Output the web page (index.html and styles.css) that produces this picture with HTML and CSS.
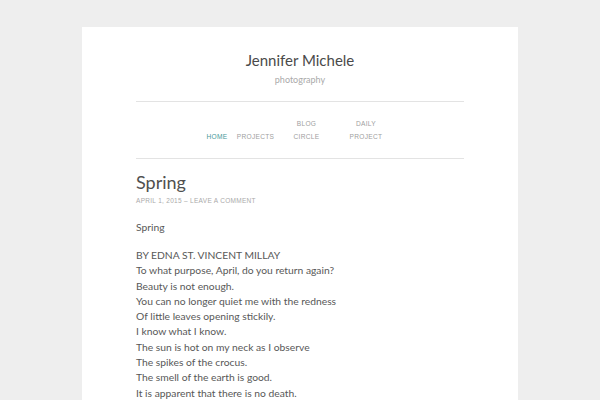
FILE: index.html
```html
<!DOCTYPE html>
<html>
<head>
<meta charset="utf-8">
<link rel="stylesheet" href="styles.css">
</head>
<body>
<div class="page">
  <header class="site-header">
    <h1 class="site-title">Jennifer Michele</h1>
    <p class="site-desc">photography</p>
  </header>
  <nav class="main-nav">
    <ul>
      <li class="c-home"><a class="current">Home</a></li>
      <li class="c-projects"><a>Projects</a></li>
      <li class="c-blog"><a class="wrap">Blog Circle</a></li>
      <li class="c-daily"><a class="wrap">Daily Project</a></li>
    </ul>
  </nav>
  <article class="post">
    <h2 class="post-title">Spring</h2>
    <div class="post-meta">April 1, 2015 – Leave a comment</div>
    <div class="post-body">
      <p>Spring</p>
      <p>BY EDNA ST. VINCENT MILLAY<br>
      To what purpose, April, do you return again?<br>
      Beauty is not enough.<br>
      You can no longer quiet me with the redness<br>
      Of little leaves opening stickily.<br>
      I know what I know.<br>
      The sun is hot on my neck as I observe<br>
      The spikes of the crocus.<br>
      The smell of the earth is good.<br>
      It is apparent that there is no death.</p>
    </div>
  </article>
</div>
</body>
</html>
```
FILE: styles.css
```css
html, body {
  margin: 0;
  padding: 0;
  background: #eeeeee;
  height: 100%;
  overflow: hidden;
}
body {
  padding-top: 27px;
  font-family: Lato, "Liberation Sans", sans-serif;
  color: #555;
}
.page {
  width: 328px;
  margin: 0 auto;
  background: #fff;
  padding: 0 54px;
  min-height: 500px;
}
.site-header {
  text-align: center;
  padding: 23px 0 15px;
  border-bottom: 1px solid #e3e3e3;
}
.site-title {
  margin: 0;
  font-size: 15px;
  line-height: 20px;
  font-weight: 400;
  color: #4a4a4a;
}
.site-desc {
  margin: 4px 0 0;
  font-size: 9px;
  line-height: 12px;
  color: #aaa;
}
.main-nav {
  padding: 15px 0 15px;
  border-bottom: 1px solid #e3e3e3;
}
.main-nav ul {
  list-style: none;
  margin: 0;
  padding: 0;
  display: flex;
  justify-content: center;
  align-items: flex-end;
}
.main-nav li {
  text-align: center;
  font-family: "Liberation Sans", Arial, sans-serif;
  font-size: 6.6px;
  line-height: 13px;
  letter-spacing: 0.3px;
  text-transform: uppercase;
  color: #a0a0a0;
}
.main-nav a {
  display: block;
  margin: 0 auto;
}
.main-nav a.wrap {
  max-width: 40px;
}
.main-nav a.current {
  color: #47999a;
}
.c-home { width: 30px; }
.c-projects { width: 47px; }
.c-blog { width: 55px; }
.c-daily { width: 64px; }
.post {
  padding-top: 11px;
}
.post-title {
  margin: 0;
  font-size: 18px;
  line-height: 24px;
  font-weight: 400;
  color: #505050;
}
.post-meta {
  margin-top: 2px;
  font-family: "Liberation Sans", Arial, sans-serif;
  font-size: 6.5px;
  line-height: 10px;
  letter-spacing: 0.3px;
  text-transform: uppercase;
  color: #aaa;
}
.post-body {
  margin-top: 14px;
  font-size: 10.3px;
  line-height: 15.3px;
  color: #585858;
}
.post-body p {
  margin: 0 0 12.7px;
}
```
